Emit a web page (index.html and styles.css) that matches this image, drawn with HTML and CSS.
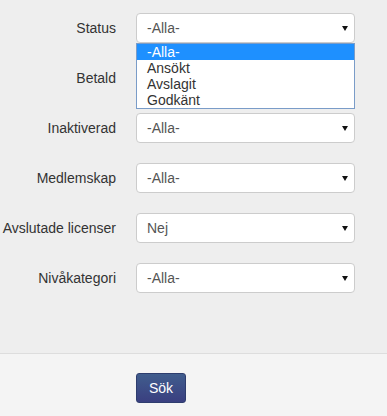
FILE: index.html
```html
<!DOCTYPE html>
<html lang="sv">
<head>
<meta charset="utf-8">
<title>Sök</title>
<link rel="stylesheet" href="styles.css">
</head>
<body>
<form class="search">
  <div class="fields">
    <div class="row">
      <label class="lbl">Status</label>
      <div class="control">
        <div class="select"><span>-Alla-</span><svg class="arrow" width="6" height="5" viewBox="0 0 6 5"><path d="M0 0H6L3 5Z"/></svg></div>
        <ul class="dropdown">
          <li class="active">-Alla-</li>
          <li>Ansökt</li>
          <li>Avslagit</li>
          <li>Godkänt</li>
        </ul>
      </div>
    </div>
    <div class="row">
      <label class="lbl">Betald</label>
      <div class="control">
        <div class="select covered"><span>-Alla-</span><svg class="arrow" width="6" height="5" viewBox="0 0 6 5"><path d="M0 0H6L3 5Z"/></svg></div>
      </div>
    </div>
    <div class="row">
      <label class="lbl">Inaktiverad</label>
      <div class="control">
        <div class="select"><span>-Alla-</span><svg class="arrow" width="6" height="5" viewBox="0 0 6 5"><path d="M0 0H6L3 5Z"/></svg></div>
      </div>
    </div>
    <div class="row">
      <label class="lbl">Medlemskap</label>
      <div class="control">
        <div class="select"><span>-Alla-</span><svg class="arrow" width="6" height="5" viewBox="0 0 6 5"><path d="M0 0H6L3 5Z"/></svg></div>
      </div>
    </div>
    <div class="row">
      <label class="lbl">Avslutade licenser</label>
      <div class="control">
        <div class="select"><span>Nej</span><svg class="arrow" width="6" height="5" viewBox="0 0 6 5"><path d="M0 0H6L3 5Z"/></svg></div>
      </div>
    </div>
    <div class="row">
      <label class="lbl">Nivåkategori</label>
      <div class="control">
        <div class="select"><span>-Alla-</span><svg class="arrow" width="6" height="5" viewBox="0 0 6 5"><path d="M0 0H6L3 5Z"/></svg></div>
      </div>
    </div>
  </div>
  <div class="footer">
    <button type="button" class="btn">Sök</button>
  </div>
</form>
</body>
</html>
```

FILE: styles.css
```css
html, body {
  margin: 0;
  padding: 0;
}
body {
  background: #eeeeee;
  font-family: "Liberation Sans", Arial, sans-serif;
  font-size: 14px;
  color: #333;
  width: 387px;
  height: 416px;
  overflow: hidden;
}
.search {
  margin: 0;
}
.fields {
  padding: 13px 0 60px 0;
  display: flex;
  flex-direction: column;
  gap: 20px;
}
.row {
  display: grid;
  grid-template-columns: 116px 219px;
  column-gap: 20px;
  align-items: center;
  height: 30px;
}
.lbl {
  text-align: right;
  white-space: nowrap;
  color: #333;
  line-height: 20px;
}
.control {
  position: relative;
  height: 30px;
}
.select {
  box-sizing: border-box;
  height: 30px;
  background: #fff;
  border: 1px solid #cccccc;
  border-radius: 4px;
  display: flex;
  align-items: center;
  justify-content: space-between;
  padding: 0 6px 0 10px;
  color: #555;
  line-height: 20px;
}
.select.covered > * {
  visibility: hidden;
}
.arrow {
  fill: #111;
  margin-top: 1px;
}
.dropdown {
  position: absolute;
  left: 0;
  top: 30px;
  width: 219px;
  box-sizing: border-box;
  margin: 0;
  padding: 0;
  list-style: none;
  background: #fff;
  border: 1px solid #7a9cc8;
  z-index: 5;
}
.dropdown li {
  height: 16px;
  line-height: 16px;
  padding-left: 10px;
  color: #333;
}
.dropdown li.active {
  background: #1e90ff;
  color: #fff;
}
.footer {
  border-top: 1px solid #dddddd;
  background: #f4f4f4;
  padding: 19px 0 0 136px;
  height: 43px;
}
.btn {
  display: block;
  box-sizing: border-box;
  height: 30px;
  width: 50px;
  padding: 0;
  border: 1px solid #2e3d6e;
  border-radius: 3px;
  background: linear-gradient(to bottom, #405d8d, #3a3f80);
  color: #fff;
  font-family: "Liberation Sans", Arial, sans-serif;
  font-size: 14px;
  line-height: 28px;
  text-align: center;
  cursor: pointer;
}
```
